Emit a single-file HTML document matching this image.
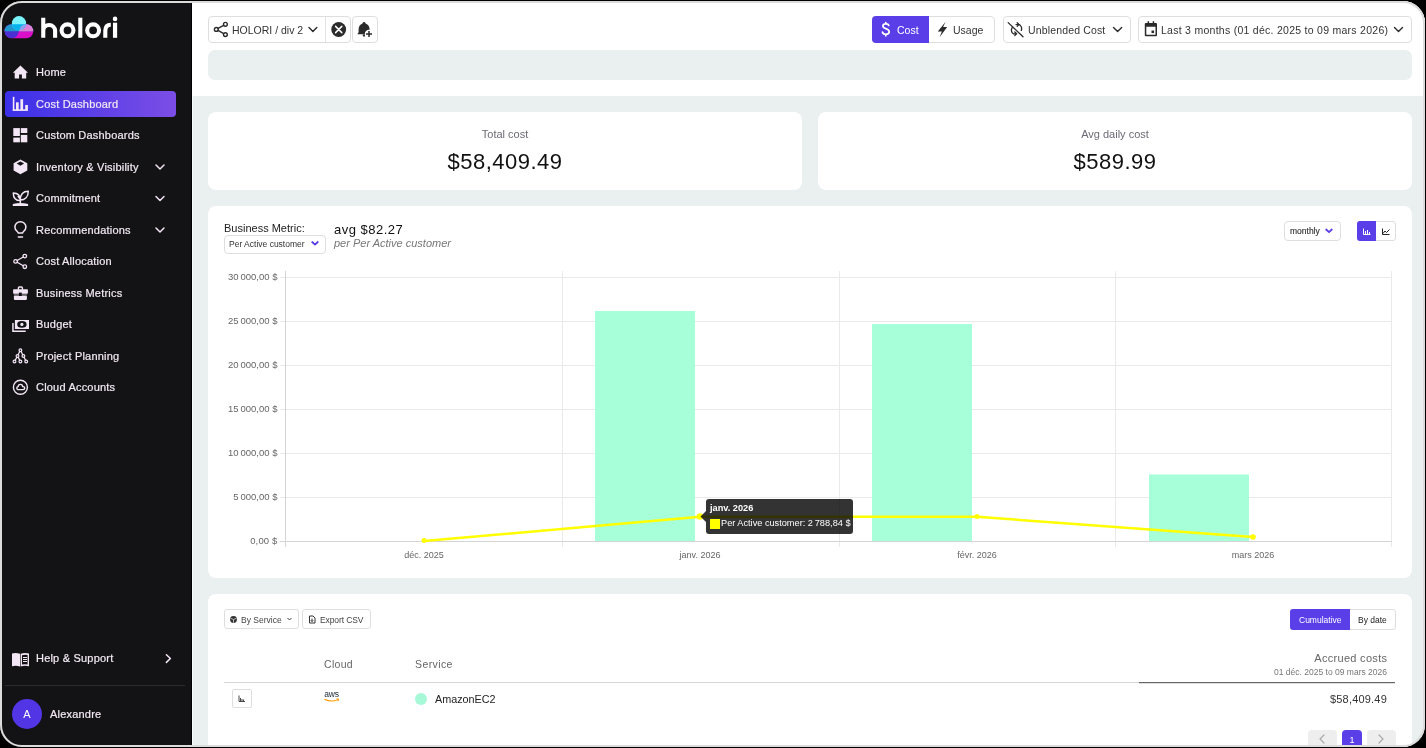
<!DOCTYPE html>
<html><head><meta charset="utf-8">
<style>
*{box-sizing:border-box;margin:0;padding:0}
html,body{width:1426px;height:748px;overflow:hidden;background:#000;font-family:"Liberation Sans",sans-serif}
.clip{position:absolute;left:0;top:1px;width:1425px;height:746px;border-radius:22px;overflow:hidden;background:#eaefef}
.pg{position:absolute;left:0;top:-1px;width:1426px;height:748px;will-change:transform}
.frame{position:absolute;left:0;top:1px;width:1425px;height:746px;border:2px solid #dcdcdc;border-radius:22px;pointer-events:none}
.a{position:absolute;white-space:nowrap}
.side{position:absolute;left:0;top:0;width:192px;height:748px;background:#131315;border-right:1px solid #000}
.nav{position:absolute;left:36px;font-size:11px;color:#f3e9f3;line-height:12px;letter-spacing:0.2px;-webkit-text-stroke:0.2px #f3e9f3}
.ni{position:absolute;left:13px;width:16px;height:16px}
.chev{position:absolute;left:155px;width:10px;height:10px}
.hdr{position:absolute;left:192px;top:0;width:1234px;height:96px;background:#fff;border-left:1px solid #fff}
.btn{position:absolute;border:1px solid #dedede;border-radius:4px;background:#fff}
.hd{font-size:10.5px;color:#333;line-height:12px}
.lbl{font-size:11px;color:#6b6b75;line-height:12px}
.big{font-size:22px;color:#111;line-height:24px;letter-spacing:0.5px}
.yl{left:200px;width:77.5px;text-align:right;letter-spacing:0.15px;font-size:9.5px;color:#666;line-height:10px}
.xl{width:100px;text-align:center;top:550px;font-size:9px;color:#666;line-height:10px}
.sm{font-size:8.5px;color:#444;line-height:10px}
.th{font-size:10.5px;color:#666;line-height:12px}
.card{position:absolute;background:#fff;border-radius:8px}
</style></head><body>
<div class="clip"><div class="pg">

<!-- SIDEBAR -->
<div class="side">
  <svg class="a" style="left:0;top:0" width="40" height="48" viewBox="0 0 40 48">
    <defs>
      <clipPath id="ctop"><rect x="0" y="0" width="40" height="31.2"/></clipPath>
      <clipPath id="ccy"><circle cx="19" cy="23.2" r="7.1"/></clipPath>
    </defs>
    <rect x="4.6" y="24.2" width="28.6" height="14" rx="7" fill="#d90fc9"/>
    <circle cx="11.6" cy="31.2" r="7" fill="#4a2fd2"/>
    <g clip-path="url(#ctop)">
      <rect x="4.6" y="24.2" width="28.6" height="14" rx="7" fill="#2098cf"/>
      <circle cx="26.2" cy="31.2" r="7" fill="#df80d8"/>
    </g>
    <circle cx="19" cy="23.2" r="7.1" fill="#7af3fb"/>
    <g clip-path="url(#ccy)"><g clip-path="url(#ctop)">
      <rect x="4.6" y="24.2" width="28.6" height="14" rx="7" fill="#02b3ee"/>
      <circle cx="26.2" cy="31.2" r="7" fill="#8fa0ef"/>
    </g></g>
  </svg>
  <svg class="a" style="left:36px;top:10px" width="90" height="34" viewBox="36 10 90 34" fill="none" stroke="#fff" stroke-width="4.1">
    <path d="M43.25 17.7 V37.8 M43.25 30.65 A5.93 5.93 0 0 1 55.1 30.65 V37.8"/>
    <circle cx="67.5" cy="30.35" r="5.95"/>
    <path d="M80.3 17.7 V37.8"/>
    <circle cx="93.1" cy="30.35" r="5.95"/>
    <path d="M105.3 37.8 V30.8 Q105.3 24.7 110.8 24.7"/>
    <path d="M115.05 22.7 V37.8" stroke-width="4.2"/>
    <circle cx="115.05" cy="18.9" r="2.3" fill="#fff" stroke="none"/>
  </svg>

  <div class="a" style="left:5px;top:91px;width:171px;height:26px;border-radius:4px;background:linear-gradient(90deg,#3a30e8,#7c4ee6)"></div>


  <svg class="a" style="left:0;top:0" width="192" height="748" viewBox="0 0 192 748" fill="none" stroke="none">
    <g fill="#f3e6f5">
      <!-- home -->
      <path d="M20.4 65.6 L28 72.8 L26.2 72.8 L26.2 78.6 L21.9 78.6 L21.9 74.6 L19.1 74.6 L19.1 78.6 L14.7 78.6 L14.7 72.8 L12.9 72.8 Z"/>
      <!-- bar chart -->
      <rect x="12.8" y="96.8" width="1.6" height="14.1"/>
      <rect x="12.8" y="109.3" width="15.1" height="1.6"/>
      <rect x="16" y="102.3" width="2.7" height="8"/>
      <rect x="20.4" y="99.2" width="2.7" height="11"/>
      <rect x="25.2" y="105" width="2.7" height="5"/>
      <!-- tiles -->
      <rect x="13.3" y="128.1" width="6.6" height="7.9"/>
      <rect x="13.3" y="137.6" width="6.6" height="4.7"/>
      <rect x="20.8" y="128.1" width="6.5" height="4.9"/>
      <rect x="20.8" y="134.9" width="6.5" height="7.4"/>
      <!-- cube -->
      <path d="M20.4 159.5 L27.3 163.2 L27.3 170.6 L20.4 174.3 L13.6 170.6 L13.6 163.2 Z M20.4 161.6 L16.7 163.6 L20.4 165.7 L24.1 163.6 Z" fill-rule="evenodd"/>
      <!-- plant base -->
      <path d="M12.8 205.9 L28.1 205.9 L28.1 204 Q20.4 202 12.8 204 Z"/>
      <!-- briefcase -->
      <rect x="13.1" y="289.3" width="14.8" height="4.4" rx="0.8"/>
      <rect x="13.9" y="295.8" width="13" height="4.1" rx="0.8"/>
      <rect x="13.9" y="293.7" width="13" height="2.1" opacity="0.4"/><rect x="18.9" y="292.6" width="2.9" height="3.4" fill="#131315"/>
      <!-- budget -->
      <path d="M14.9 319.9 H29 V329 H14.9 Z M17.2 324.4 A4.7 3.3 0 1 0 26.6 324.4 A4.7 3.3 0 1 0 17.2 324.4 Z" fill-rule="evenodd"/>
      <circle cx="21.9" cy="324.4" r="1.6"/>
      <path d="M12.2 323 H13.7 V330.6 H25.7 V332.1 H12.2 Z"/>
      <!-- book -->
      <path d="M12 653.5 Q16 652.5 20 653.8 L20 666.5 Q16 665.3 12 666.3 Z"/>
      <path d="M20.6 653.8 Q24.8 652.5 29 653.5 L29 666.3 Q24.8 665.3 20.6 666.5 Z M22 655.3 L22 664.6 Q24.8 664 27.6 664.5 L27.6 655 Q24.8 654.3 22 655.3 Z" fill-rule="evenodd"/>
      <rect x="23" y="657" width="4" height="1"/>
      <rect x="23" y="659" width="4" height="1"/>
      <rect x="23" y="661" width="4" height="1"/>
    </g>
    <g stroke="#f3e6f5" stroke-width="1.5" stroke-linecap="round" stroke-linejoin="round">
      <!-- plant leaves -->
      <path d="M20.3 203.5 V199 M20.3 200.6 C15.5 200.6 13.3 197.3 13.3 192.9 C18 192.9 20.3 195.8 20.3 200.6 M20.3 200 C20.3 194.5 23.3 191.2 28.3 191.2 C28.3 196.8 25 200 20.3 200 M19.6 198.2 L18.2 196.6"/>
      <!-- bulb -->
      <path d="M18.2 233 C18.2 231.5 14.9 230.5 14.9 227.2 A5.5 5.5 0 1 1 25.9 227.2 C25.9 230.5 22.6 231.5 22.6 233 Z" stroke-width="1.5"/>
      <path d="M18.3 237 H22.5"/>
      <!-- share -->
      <g stroke-width="1.3">
        <circle cx="15.6" cy="261.4" r="1.8"/>
        <circle cx="24.8" cy="256.1" r="1.8"/>
        <circle cx="24.8" cy="266.7" r="1.8"/>
        <path d="M17.2 260.5 L23.2 257 M17.2 262.3 L23.2 265.8"/>
      </g>
      <path d="M18.4 289.3 V287.9 Q18.4 287 19.3 287 H21.5 Q22.4 287 22.4 287.9 V289.3" stroke-width="1.4"/>
      <!-- tree -->
      <g stroke-width="1.2">
        <circle cx="20.4" cy="350.2" r="1.4"/>
        <circle cx="17.5" cy="356" r="1.4"/>
        <circle cx="23.4" cy="356" r="1.4"/>
        <circle cx="14.5" cy="361.5" r="1.4"/>
        <circle cx="20.4" cy="361.5" r="1.4"/>
        <circle cx="26.2" cy="361.5" r="1.4"/>
        <path d="M19.7 351.5 L18.2 354.6 M21.1 351.5 L22.7 354.6 M16.8 357.4 L15.2 360.1 M18.2 357.4 L19.7 360.1 M24.1 357.4 L25.5 360.1"/>
      </g>
      <!-- cloud accounts -->
      <g stroke-width="1.4">
        <circle cx="20.4" cy="387.3" r="7"/>
        <path d="M17.8 389.6 H23.2 A1.5 1.5 0 0 0 23.2 386.6 L22.6 386.6 A2.2 2.2 0 0 0 18.2 386.6 A1.55 1.55 0 0 0 17.8 389.6 Z"/>
      </g>
      <!-- chevrons -->
      <path d="M156 165 L160 169 L164 165"/>
      <path d="M156 196.5 L160 200.5 L164 196.5"/>
      <path d="M156 228 L160 232 L164 228"/>
      <path d="M166.4 654.7 L170.4 658.5 L166.4 662.4"/>
    </g>
  </svg>
  <div class="nav a" style="top:66px">Home</div>
  <div class="nav a" style="top:98px">Cost Dashboard</div>
  <div class="nav a" style="top:129px">Custom Dashboards</div>
  <div class="nav a" style="top:161px">Inventory &amp; Visibility</div>
  <div class="nav a" style="top:192px">Commitment</div>
  <div class="nav a" style="top:224px">Recommendations</div>
  <div class="nav a" style="top:255px">Cost Allocation</div>
  <div class="nav a" style="top:287px">Business Metrics</div>
  <div class="nav a" style="top:318px">Budget</div>
  <div class="nav a" style="top:350px">Project Planning</div>
  <div class="nav a" style="top:381px">Cloud Accounts</div>
  <div class="nav a" style="top:652px">Help &amp; Support</div>

  <div class="a" style="left:5px;top:685px;width:180px;height:1px;background:#2c2c30"></div>
  <div class="a" style="left:12px;top:699px;width:30px;height:30px;border-radius:50%;background:#5236e6;color:#fff;font-size:11px;line-height:30px;text-align:center">A</div>
  <div class="nav a" style="left:50px;top:708px">Alexandre</div>
</div>

<!-- HEADER -->
<div class="a" style="left:192px;top:0;width:1px;height:748px;background:#f8fbfc"></div>
<div class="hdr"></div>
<div class="btn" style="left:208px;top:16px;width:143px;height:27px"></div>
<div class="a" style="left:325px;top:17px;width:1px;height:25px;background:#e3e3e3"></div>
<div class="btn" style="left:352px;top:16px;width:26px;height:27px"></div>
<div class="a hd" style="left:232px;top:24px">HOLORI / div 2</div>
<div class="btn" style="left:1138px;top:16px;width:274px;height:27px"></div>
<div class="btn" style="left:1003px;top:16px;width:128px;height:27px"></div>
<div class="btn" style="left:872px;top:16px;width:123px;height:27px"></div>
<div class="a" style="left:872px;top:16px;width:57px;height:27px;background:#5a3fe8;border-radius:4px 0 0 4px"></div>
<div class="a hd" style="left:897px;top:24px;color:#fff">Cost</div>
<div class="a hd" style="left:953px;top:24px">Usage</div>
<div class="a hd" style="left:1028px;top:24px;letter-spacing:0.15px">Unblended Cost</div>
<div class="a hd" style="left:1161px;top:24px;letter-spacing:0.27px">Last 3 months (01 déc. 2025 to 09 mars 2026)</div>
<div class="a" style="left:208px;top:50px;width:1204px;height:30px;background:#eaefef;border-radius:7px"></div>
<svg class="a" style="left:192px;top:0" width="1234" height="48" viewBox="192 0 1234 48" fill="none">
  <g stroke="#2b2b2b" stroke-width="1.4" stroke-linecap="round" stroke-linejoin="round">
    <circle cx="216.3" cy="29.4" r="1.9"/>
    <circle cx="225.4" cy="24.3" r="1.9"/>
    <circle cx="225.4" cy="34.6" r="1.9"/>
    <path d="M218 28.4 L223.7 25.3 M218 30.4 L223.7 33.6"/>
    <path d="M309 27.5 L312.9 31.5 L316.8 27.5"/>
    <path d="M1113.5 27.6 L1117.6 31.6 L1121.7 27.6"/>
    <path d="M1394.5 27.6 L1398.5 31.6 L1402.5 27.6"/>
  </g>
  <circle cx="338.7" cy="29.5" r="7.4" fill="#2b2b2b"/>
  <path d="M335.6 26.4 L341.8 32.6 M341.8 26.4 L335.6 32.6" stroke="#fff" stroke-width="1.5" stroke-linecap="round"/>
  <!-- bell -->
  <path d="M364 21.9 C365.5 21.9 365.6 23.3 365.6 23.5 C368.3 24.3 369.6 26.7 369.6 29.5 L369.6 32 L371 34.2 L357.4 34.2 L358.6 32.3 L358.6 29.5 C358.6 26.7 359.9 24.3 362.5 23.5 C362.5 23.3 362.6 21.9 364 21.9 Z" fill="#2b2b2b"/>
  <circle cx="364" cy="35.4" r="1.2" fill="#2b2b2b"/>
  <circle cx="369" cy="34" r="4.2" fill="#fff"/>
  <path d="M366 34 H372 M369 31 V37" stroke="#2b2b2b" stroke-width="1.5"/>
  <!-- dollar -->
  <path d="M888.8 25.5 C888.5 24.3 887.3 23.8 885.8 23.8 C884 23.8 882.9 24.7 882.9 26.1 C882.9 29.3 889.2 27.9 889.2 31.7 C889.2 33.2 887.8 34.3 885.8 34.3 C884.1 34.3 882.8 33.6 882.5 32.2 M885.8 22.6 V23.8 M885.8 34.3 V35.8" stroke="#fff" stroke-width="1.7" stroke-linecap="round"/>
  <!-- bolt -->
  <path d="M945.6 21.8 L937.8 31.4 L941.9 31.4 L939.6 37.2 L947.2 27.1 L943.1 27.1 Z" fill="#2b2b2b"/>
  <!-- unblended icon -->
  <g stroke="#2b2b2b" stroke-width="1.3" stroke-linecap="round" fill="none">
    <path d="M1008.2 22.6 L1023 36.8"/>
    <path d="M1012.3 27.3 C1011 29.5 1011.4 32.2 1013.3 33.8 L1016.5 33.8 M1014.8 32 L1016.6 33.8 L1014.8 35.6"/>
    <path d="M1019.6 24.7 C1021.2 26 1022 28.6 1021.3 30.4 M1016 24.6 L1018.8 24.6 M1017.2 22.8 L1019 24.6 L1017.2 26.4"/>
  </g>
  <!-- calendar -->
  <path d="M1144.8 24 Q1144.8 23 1145.8 23 H1156 Q1157 23 1157 24 V35.2 Q1157 36.2 1156 36.2 H1145.8 Q1144.8 36.2 1144.8 35.2 Z M1146.3 26.8 V34.7 H1155.5 V26.8 Z" fill="#2b2b2b" fill-rule="evenodd"/>
  <rect x="1147.6" y="21.2" width="1.5" height="2.8" fill="#2b2b2b"/>
  <rect x="1152.7" y="21.2" width="1.5" height="2.8" fill="#2b2b2b"/>
  <rect x="1151.5" y="30.5" width="2.6" height="2.6" fill="#2b2b2b"/>
</svg>

<!-- CARDS -->
<div class="card" style="left:208px;top:112px;width:594px;height:78px"></div>
<div class="card" style="left:818px;top:112px;width:594px;height:78px"></div>
<div class="a lbl" style="left:208px;top:128px;width:594px;text-align:center">Total cost</div>
<div class="a big" style="left:208px;top:150px;width:594px;text-align:center">$58,409.49</div>
<div class="a lbl" style="left:818px;top:128px;width:594px;text-align:center">Avg daily cost</div>
<div class="a big" style="left:818px;top:150px;width:594px;text-align:center">$589.99</div>

<div class="card" style="left:208px;top:206px;width:1204px;height:372px"></div>
<div class="a" style="left:224px;top:222px;font-size:11px;color:#222;line-height:12px">Business Metric:</div>
<div class="btn" style="left:224px;top:235px;width:102px;height:19px"></div>
<div class="a" style="left:229px;top:239px;font-size:8.5px;color:#333;line-height:10px">Per Active customer</div>
<div class="a" style="left:334px;top:222px;font-size:13px;color:#111;line-height:15px;letter-spacing:0.5px">avg $82.27</div>
<div class="a" style="left:334px;top:237px;font-size:11px;color:#777;font-style:italic;line-height:12px">per Per Active customer</div>
<div class="btn" style="left:1284px;top:221px;width:57px;height:20px;border-radius:4px"></div>
<div class="a" style="left:1290px;top:226px;font-size:8.5px;color:#333;line-height:10px;-webkit-text-stroke:0.15px #333">monthly</div>
<div class="btn" style="left:1357px;top:221px;width:39px;height:20px;border-radius:3px"></div>
<div class="a" style="left:1357px;top:221px;width:19px;height:20px;background:#5a3fe8;border-radius:3px 0 0 3px"></div>

<svg class="a" style="left:208px;top:206px" width="1204" height="372" viewBox="208 206 1204 372" fill="none">
  <g fill="#5a3fe8">
    <path d="M312.2 242 L315 244.6 L317.8 242" stroke="#5a3fe8" stroke-width="1.8" fill="none" stroke-linecap="round" stroke-linejoin="round"/>
    <path d="M1326.2 229.5 L1329 232.1 L1331.8 229.5" stroke="#5a3fe8" stroke-width="1.8" fill="none" stroke-linecap="round" stroke-linejoin="round"/>
  </g>
  <g stroke="#eaeaea" stroke-width="1">
    <path d="M280 277.5 H1392 M280 321.5 H1392 M280 365.5 H1392 M280 409.5 H1392 M280 453.5 H1392 M280 497.5 H1392"/>
    <path d="M562.5 271 V547 M839.5 271 V547 M1115.5 271 V547 M1391.5 271 V547"/>
  </g>
  <path d="M285.5 271 V547 M280 541.5 H1392" stroke="#d4d4d4" stroke-width="1"/>
  <g fill="#a6ffd8">
    <rect x="595" y="311" width="100" height="230"/>
    <rect x="872" y="324" width="100" height="217"/>
    <rect x="1149" y="474.5" width="100" height="66.5"/>
  </g>
  <path d="M424 541 L700 516.8 L977 516.8 L1253 537" stroke="#ffff00" stroke-width="2.5" stroke-linejoin="round"/>
  <g fill="#ffff00">
    <circle cx="424" cy="540.5" r="2.5"/>
    <circle cx="700" cy="516.5" r="3.3"/>
    <circle cx="977" cy="516.5" r="2.5"/>
    <circle cx="1253" cy="537" r="2.8"/>
  </g>
  <path d="M706 499 H850 Q853 499 853 502 V531 Q853 534 850 534 H709 Q706 534 706 531 V522 L700.5 516.5 L706 511 V502 Q706 499 709 499 Z" fill="rgba(0,0,0,0.8)"/>
  <rect x="710" y="519" width="10" height="10" fill="#ffff00" stroke="#fff" stroke-width="0"/>
  <!-- chart type icons -->
  <g stroke="#fff" stroke-width="1" fill="none">
    <path d="M1363.5 228.5 V234.5 H1370.5"/>
    <path d="M1365.5 231 V234 M1367.5 230 V234 M1369.5 232 V234"/>
  </g>
  <g stroke="#222" stroke-width="1" fill="none">
    <path d="M1382.5 228.5 V234.5 H1389.5"/>
    <path d="M1383 233.5 L1385 231 L1386.5 232.5 L1389.5 229.5"/>
  </g>
</svg>
<div class="a yl" style="top:272px">30&#8239;000,00&nbsp;$</div>
<div class="a yl" style="top:316px">25&#8239;000,00&nbsp;$</div>
<div class="a yl" style="top:360px">20&#8239;000,00&nbsp;$</div>
<div class="a yl" style="top:404px">15&#8239;000,00&nbsp;$</div>
<div class="a yl" style="top:448px">10&#8239;000,00&nbsp;$</div>
<div class="a yl" style="top:492px">5&#8239;000,00&nbsp;$</div>
<div class="a yl" style="top:536px">0,00&nbsp;$</div>
<div class="a xl" style="left:374px">déc. 2025</div>
<div class="a xl" style="left:650px">janv. 2026</div>
<div class="a xl" style="left:927px">févr. 2026</div>
<div class="a xl" style="left:1203px">mars 2026</div>
<div class="a" style="left:710px;top:503px;font-size:9.2px;font-weight:bold;color:#fff;line-height:11px">janv. 2026</div>
<div class="a" style="left:721px;top:518px;font-size:9.2px;color:#fff;line-height:11px">Per Active customer: 2&#8239;788,84&nbsp;$</div>

<div class="card" style="left:208px;top:594px;width:1204px;height:200px"></div>
<div class="btn" style="left:224px;top:609px;width:75px;height:20px;border-radius:3px"></div>
<div class="btn" style="left:302px;top:609px;width:69px;height:20px;border-radius:3px"></div>
<div class="a sm" style="left:241px;top:615px">By Service</div>
<div class="a sm" style="left:320px;top:615px;letter-spacing:-0.1px">Export CSV</div>
<div class="btn" style="left:1290px;top:609px;width:106px;height:21px;border-radius:3px"></div>
<div class="a" style="left:1290px;top:609px;width:60px;height:21px;background:#5a3fe8;border-radius:3px 0 0 3px"></div>
<div class="a sm" style="left:1299px;top:615px;color:#fff">Cumulative</div>
<div class="a sm" style="left:1358px;top:615px;color:#222">By date</div>
<div class="a th" style="left:324px;top:658px;letter-spacing:0.3px">Cloud</div>
<div class="a th" style="left:415px;top:658px;letter-spacing:0.4px">Service</div>
<div class="a th" style="top:652px;width:1187.3px;text-align:right;left:200px;font-size:11px;letter-spacing:0.3px">Accrued costs</div>
<div class="a" style="left:200px;top:667px;width:1187px;text-align:right;font-size:8.5px;color:#777;line-height:10px">01 déc. 2025 to 09 mars 2026</div>
<div class="a" style="left:224px;top:682px;width:915px;height:1px;background:#d6d6d6"></div>
<div class="a" style="left:1139px;top:682px;width:256px;height:1px;background:#666"></div><div class="a" style="left:1139px;top:683px;width:256px;height:1px;background:#dedede"></div>
<div class="btn" style="left:232px;top:689px;width:20px;height:19px;border-radius:2px"></div>
<div class="a" style="left:415px;top:692.5px;width:12px;height:12px;border-radius:50%;background:#a6f8d6"></div>
<div class="a" style="left:435px;top:693px;font-size:10.8px;color:#222;line-height:12px">AmazonEC2</div>
<div class="a" style="left:200px;top:693px;width:1187px;text-align:right;font-size:11px;color:#333;line-height:12px;letter-spacing:0.2px">$58,409.49</div>
<div class="a" style="left:1308px;top:730px;width:29px;height:30px;background:#eeeeee;border-radius:4px"></div>
<div class="a" style="left:1342px;top:730px;width:20px;height:30px;background:#5a3fe8;border-radius:4px"></div>
<div class="a" style="left:1367px;top:730px;width:29px;height:30px;background:#eeeeee;border-radius:4px"></div>
<div class="a" style="left:1342px;top:735px;width:20px;text-align:center;font-size:9px;color:#fff;line-height:10px">1</div>
<svg class="a" style="left:208px;top:594px" width="1204" height="154" viewBox="208 594 1204 154" fill="none">
  <g stroke="#aaa" stroke-width="1.2" stroke-linecap="round"><path d="M1324 735 L1320 739 L1324 743"/><path d="M1379 735 L1383 739 L1379 743"/></g>
  <path d="M287.5 618 L289.5 620 L291.5 618" stroke="#444" stroke-width="1"/>
  <g stroke="#333" stroke-width="1" fill="none">
    <circle cx="233.5" cy="619.5" r="3.4" fill="#333" stroke="none"/>
    <path d="M230.6 618.2 L233.5 619.6 L236.4 618.2 M233.5 619.6 V622.8" stroke="#ddd" stroke-width="0.8"/>
    <path d="M309.5 616 H313 L315 618 V623 H309.5 Z M312 618.5 V621.5 M310.8 620.3 L312 621.5 L313.2 620.3"/>
  </g>
  <g stroke="#333" stroke-width="0.9" fill="none">
    <path d="M239 695.5 V701.5 H245"/>
    <path d="M240.5 698 V701 M242 699 V701 M243.5 699.5 V701"/>
  </g>
  <text x="324.3" y="696.6" font-family="Liberation Sans" font-size="8.5" fill="#252f3e" letter-spacing="-0.2">aws</text>
  <path d="M324.5 699.2 Q331.5 702.8 338 699.4 M336.6 698.9 L338.4 699.2 L338.2 700.9" stroke="#ff9900" stroke-width="1.1"/>
</svg>
</div></div>
<div class="frame"></div>
</body></html>
